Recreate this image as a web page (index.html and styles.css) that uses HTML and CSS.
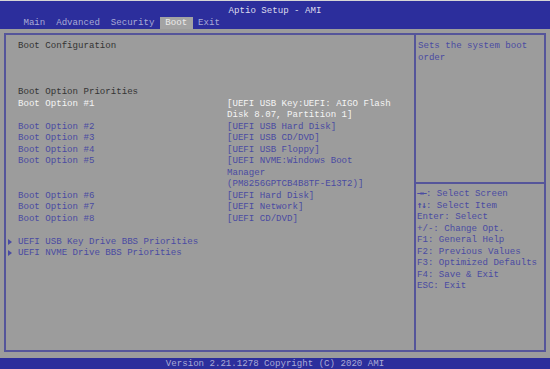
FILE: index.html
```html
<!DOCTYPE html>
<html>
  <head>
    <title>Aptio Setup - AMI</title>
    <link rel="stylesheet" href="styles.css">
  </head>
  <body>
    <div class="screen">
      <!-- title bar + tabs -->
      <div class="header">
        <div class="title">Aptio Setup - AMI</div>
        <div class="tabs">
          <span class="tab">Main</span>
          <span class="tab">Advanced</span>
          <span class="tab">Security</span>
          <span class="tab active">Boot</span>
          <span class="tab">Exit</span>
        </div>
      </div>

      <div class="main">
        <div class="frame">
          <div class="options">
            <div class="row heading">Boot Configuration</div>
            <div class="row blank"></div>
            <div class="row blank"></div>
            <div class="row blank"></div>
            <div class="row heading">Boot Option Priorities</div>
            <div class="row selected">
              <span class="label">Boot Option #1</span>
              <span class="value">[UEFI USB Key:UEFI: AIGO Flash<br>Disk 8.07, Partition 1]</span>
            </div>
            <div class="row">
              <span class="label">Boot Option #2</span>
              <span class="value">[UEFI USB Hard Disk]</span>
            </div>
            <div class="row">
              <span class="label">Boot Option #3</span>
              <span class="value">[UEFI USB CD/DVD]</span>
            </div>
            <div class="row">
              <span class="label">Boot Option #4</span>
              <span class="value">[UEFI USB Floppy]</span>
            </div>
            <div class="row">
              <span class="label">Boot Option #5</span>
              <span class="value">[UEFI NVME:Windows Boot<br>Manager<br>(PM8256GPTCB4B8TF-E13T2)]</span>
            </div>
            <div class="row">
              <span class="label">Boot Option #6</span>
              <span class="value">[UEFI Hard Disk]</span>
            </div>
            <div class="row">
              <span class="label">Boot Option #7</span>
              <span class="value">[UEFI Network]</span>
            </div>
            <div class="row">
              <span class="label">Boot Option #8</span>
              <span class="value">[UEFI CD/DVD]</span>
            </div>
            <div class="row blank"></div>
            <div class="row submenu"><span class="arrow"></span>UEFI USB Key Drive BBS Priorities</div>
            <div class="row submenu"><span class="arrow"></span>UEFI NVME Drive BBS Priorities</div>
          </div>

          <div class="side">
            <div class="help">Sets the system boot<br>order</div>
            <div class="keys">
              <div><span class="glyph">&rarr;&larr;</span>: Select Screen</div>
              <div><span class="glyph">&uarr;&darr;</span>: Select Item</div>
              <div>Enter: Select</div>
              <div>+/-: Change Opt.</div>
              <div>F1: General Help</div>
              <div>F2: Previous Values</div>
              <div>F3: Optimized Defaults</div>
              <div>F4: Save &amp; Exit</div>
              <div>ESC: Exit</div>
            </div>
          </div>
        </div>
      </div>

      <div class="footer">Version 2.21.1278 Copyright (C) 2020 AMI</div>
    </div>
  </body>
</html>
```

FILE: styles.css
```css
body,
html {
  margin: 0;
  height: 100%;
}
body {
  background-color: #0b0b0b;
  font-family: 'Liberation Mono', 'DejaVu Sans Mono', monospace;
  font-size: 9.1px;
  line-height: 11.5px;
}

.screen {
  width: 550px;
  height: 369px;
  display: flex;
  flex-direction: column;
}

/* title bar */
.header {
  height: 28px;
  border-top: 1px solid #d6d6d6;
  background-color: #2c2e9c;
  display: flex;
  flex-direction: column;
}

.title {
  height: 16px;
  padding-top: 4px;
  box-sizing: border-box;
  text-align: center;
  color: #dcdcec;
}

.tabs {
  display: flex;
  padding-left: 18px;
  margin-top: 0;
}

.tab {
  padding: 0 1ch;
  height: 12px;
  line-height: 12px;
  color: #a9abd6;
}

.tab.active {
  background-color: #a3a3a3;
  color: #ececec;
}

/* body */
.main {
  flex: 1;
  background-color: #9c9c9c;
  padding: 4px 4px 6px 4px;
  display: flex;
}

.frame {
  flex: 1;
  display: flex;
  border: 2px solid #55559a;
}

.options {
  width: 408px;
  padding-top: 5px;
}

.row {
  display: grid;
  grid-template-columns: 209px 1fr;
  padding-left: 12px;
  white-space: nowrap;
  color: #4a4ba2;
}

.row.blank {
  height: 11.5px;
}

.row.heading {
  display: block;
  color: #343434;
}

.row.selected {
  color: #f4f4f4;
}

.row.submenu {
  display: flex;
  padding-left: 0;
}

.arrow {
  width: 12px;
  position: relative;
}

.arrow::before {
  content: '';
  position: absolute;
  left: 2px;
  top: 3px;
  border-left: 4px solid #4a4ba2;
  border-top: 3px solid transparent;
  border-bottom: 3px solid transparent;
}

.side {
  flex: 1;
  border-left: 2px solid #55559a;
  display: flex;
  flex-direction: column;
  color: #4a4ba2;
}

.help {
  height: 149px;
  box-sizing: border-box;
  padding: 5px 2px 0 2px;
  border-bottom: 2px solid #55559a;
}

.keys {
  padding: 4px 0 0 1px;
}

.glyph {
  font-family: 'DejaVu Sans Mono', monospace;
  font-weight: bold;
  letter-spacing: -1px;
}

.footer {
  height: 11px;
  line-height: 11px;
  background-color: #2c2e9c;
  color: #a9abd6;
  text-align: center;
}
```
